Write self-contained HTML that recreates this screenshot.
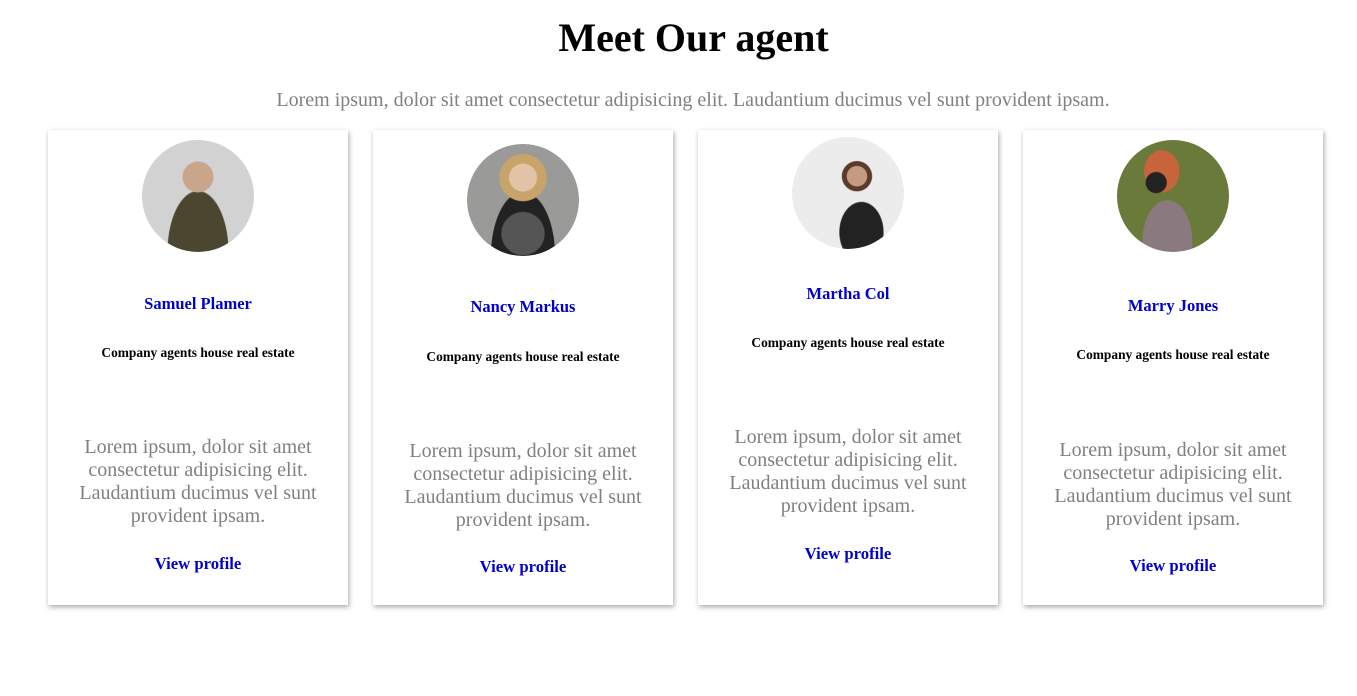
<!DOCTYPE html>
<html><head><meta charset="utf-8"><style>
body{margin:0;background:#fff;font-family:"Liberation Serif",serif;width:1357px;height:696px;overflow:hidden;position:relative}
h1{position:absolute;top:15px;left:0;width:1387px;margin:0;text-align:center;font-size:40px;font-weight:bold;line-height:46px}
.sub{position:absolute;top:89px;left:0;width:1386px;text-align:center;font-size:20px;color:#808080}
.card{position:absolute;top:130px;width:300px;height:475px;background:#fff;box-shadow:1px 2px 5px rgba(0,0,0,.35)}
.card>*{position:absolute;left:0;width:300px;text-align:center;margin:0}
.av{left:94px!important;width:112px!important;height:112px;border-radius:50%}
.nm{font-weight:bold;font-size:16.5px;color:#0000cc}
.co{font-weight:bold;font-size:13.4px;color:#000}
.lo{font-size:20px;line-height:23px;color:#808080;padding:0 15px;box-sizing:border-box}
.vp{font-weight:bold;font-size:16.7px;color:#0000cc}
</style></head><body>
<h1>Meet Our agent</h1>
<div class="sub">Lorem ipsum, dolor sit amet consectetur adipisicing elit. Laudantium ducimus vel sunt provident ipsam.</div>

<div class="card" style="left:48px">
<div class="av" style="top:10px;background:radial-gradient(circle at 50% 33%,#c9a58c 0 16%,transparent 17%),radial-gradient(ellipse at 50% 100%,#4b4630 0 38%,transparent 39%),#d2d2d2"></div>
<p class="nm" style="top:164px">Samuel Plamer</p>
<p class="co" style="top:215px">Company agents house real estate</p>
<p class="lo" style="top:306px">Lorem ipsum, dolor sit amet consectetur adipisicing elit. Laudantium ducimus vel sunt provident ipsam.</p>
<p class="vp" style="top:424px">View profile</p>
</div>

<div class="card" style="left:373px">
<div class="av" style="top:14px;background:radial-gradient(circle at 50% 30%,#e3c3a8 0 14%,#c9a46a 15% 24%,transparent 25%),radial-gradient(circle at 50% 80%,#555 0 20%,transparent 21%),radial-gradient(ellipse at 50% 100%,#222 0 40%,transparent 41%),#9a9a98"></div>
<p class="nm" style="top:167px">Nancy Markus</p>
<p class="co" style="top:219px">Company agents house real estate</p>
<p class="lo" style="top:310px">Lorem ipsum, dolor sit amet consectetur adipisicing elit. Laudantium ducimus vel sunt provident ipsam.</p>
<p class="vp" style="top:427px">View profile</p>
</div>

<div class="card" style="left:698px">
<div class="av" style="top:7px;background:radial-gradient(circle at 58% 35%,#c49a80 0 10%,#5a3a28 11% 15%,transparent 16%),radial-gradient(ellipse at 62% 85%,#222 0 22%,transparent 23%),#ececec"></div>
<p class="nm" style="top:154px">Martha Col</p>
<p class="co" style="top:205px">Company agents house real estate</p>
<p class="lo" style="top:296px">Lorem ipsum, dolor sit amet consectetur adipisicing elit. Laudantium ducimus vel sunt provident ipsam.</p>
<p class="vp" style="top:414px">View profile</p>
</div>

<div class="card" style="left:1023px">
<div class="av" style="top:10px;background:radial-gradient(circle at 35% 38%,#222 0 10%,transparent 11%),radial-gradient(ellipse at 40% 28%,#c8643c 0 18%,transparent 19%),radial-gradient(ellipse at 45% 90%,#8a7a80 0 28%,transparent 29%),#6a7a3a"></div>
<p class="nm" style="top:166px">Marry Jones</p>
<p class="co" style="top:217px">Company agents house real estate</p>
<p class="lo" style="top:309px">Lorem ipsum, dolor sit amet consectetur adipisicing elit. Laudantium ducimus vel sunt provident ipsam.</p>
<p class="vp" style="top:426px">View profile</p>
</div>
</body></html>
